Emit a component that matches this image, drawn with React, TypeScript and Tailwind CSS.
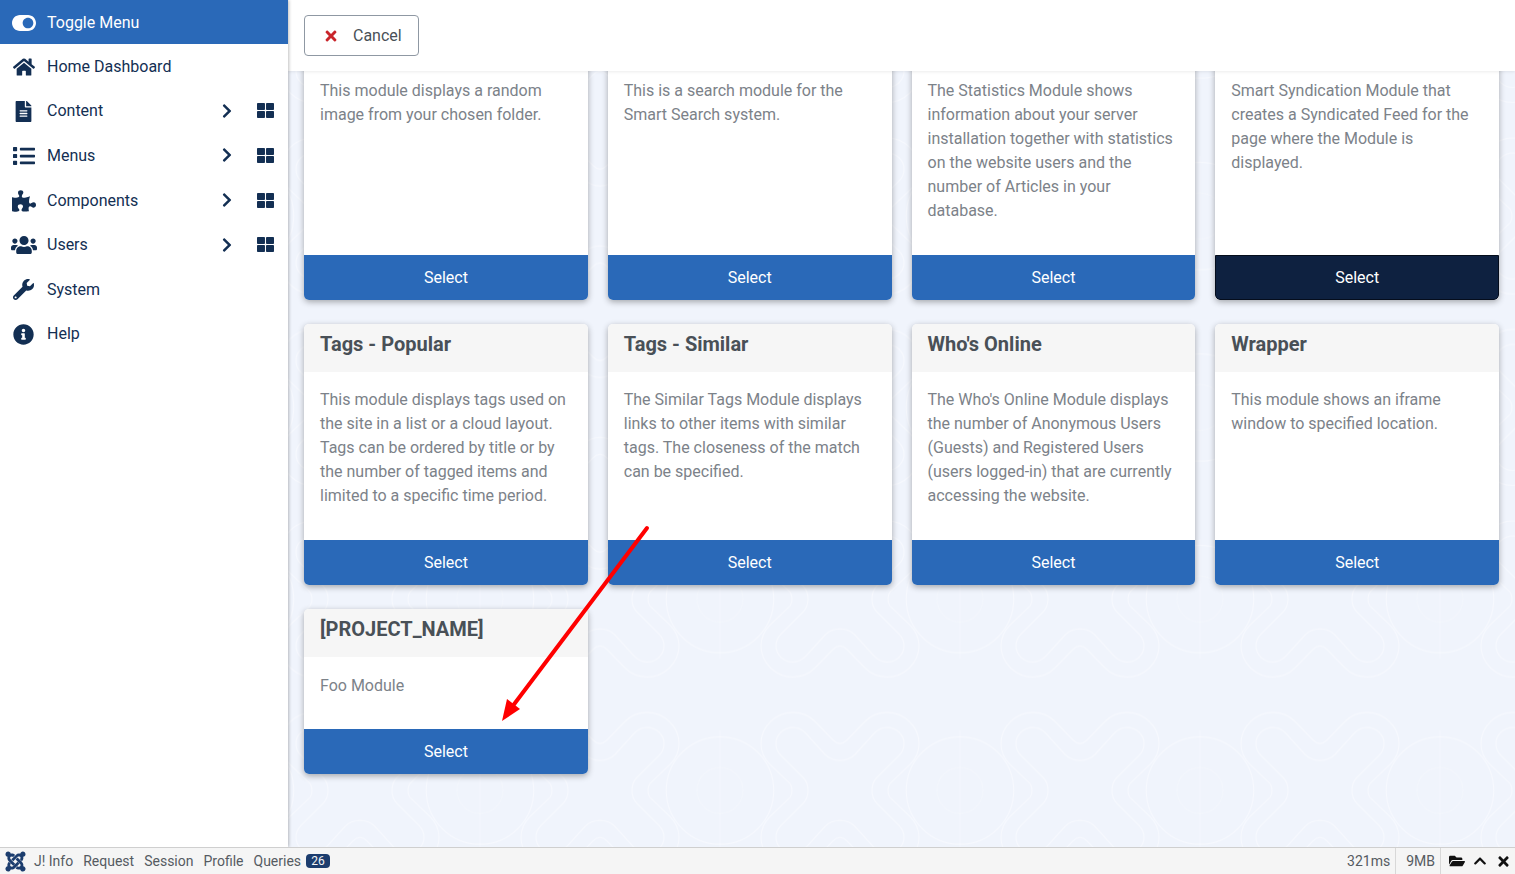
import React from "react";
import { FaToggleOn, FaHome, FaFileAlt, FaList, FaPuzzlePiece, FaUsers, FaWrench, FaInfoCircle, FaChevronRight, FaThLarge, FaTimes, FaFolderOpen, FaChevronUp, FaJoomla } from "react-icons/fa";

const nav = [
  { label: "Home Dashboard", Icon: FaHome, size: 22 },
  { label: "Content", Icon: FaFileAlt, size: 21, more: true },
  { label: "Menus", Icon: FaList, size: 22, more: true },
  { label: "Components", Icon: FaPuzzlePiece, size: 24, more: true },
  { label: "Users", Icon: FaUsers, size: 26, more: true },
  { label: "System", Icon: FaWrench, size: 21 },
  { label: "Help", Icon: FaInfoCircle, size: 21 },
];

const cards = [
  { title: "", text: "This module displays a random image from your chosen folder." },
  { title: "", text: "This is a search module for the Smart Search system." },
  { title: "", text: "The Statistics Module shows information about your server installation together with statistics on the website users and the number of Articles in your database." },
  { title: "", text: "Smart Syndication Module that creates a Syndicated Feed for the page where the Module is displayed.", dark: true },
  { title: "Tags - Popular", text: "This module displays tags used on the site in a list or a cloud layout. Tags can be ordered by title or by the number of tagged items and limited to a specific time period." },
  { title: "Tags - Similar", text: "The Similar Tags Module displays links to other items with similar tags. The closeness of the match can be specified." },
  { title: "Who's Online", text: "The Who's Online Module displays the number of Anonymous Users (Guests) and Registered Users (users logged-in) that are currently accessing the website." },
  { title: "Wrapper", text: "This module shows an iframe window to specified location." },
  { title: "[PROJECT_NAME]", text: "Foo Module", low: true },
];

const outer = "M0,-47 C3,-47 5,-48.5 7,-50.5 L25,-69 C31,-75 39,-78 47,-78 C64,-78 79,-64 79,-47 C79,-39 76,-32 70,-26 L50,-7 C48,-4.5 48,-2 48,0";
const inner = "M0,-30 C6,-30 11,-32 15,-36 L34,-57 C38,-61 42,-63 47,-63 C56,-63 64,-56 64,-47 C64,-42 62,-38 59,-35 L37,-13 C33,-9 32,-4 32,0";

function Pattern() {
  const q = [1, -1];
  return (
    <svg className="absolute inset-0 h-full w-full" aria-hidden="true">
      <defs>
        <pattern id="bgp" width="240" height="191.5" patternUnits="userSpaceOnUse" patternTransform="translate(192 120)">
          <g fill="none" stroke="#f7f9fe" strokeWidth="1">
            <circle cx="0" cy="96" r="53.7" />
            <circle cx="240" cy="96" r="53.7" />
            <circle cx="0" cy="96" r="23" strokeOpacity="0.45" />
            <circle cx="240" cy="96" r="23" strokeOpacity="0.45" />
            <path d="M0 36V156M240 36V156" strokeOpacity="0.4" />
            <g transform="translate(120 96)">
              {q.map((sx) =>
                q.map((sy) => (
                  <g key={`${sx}${sy}`} transform={`scale(${sx} ${sy})`}>
                    <path d={outer} />
                    <path d={inner} />
                  </g>
                ))
              )}
            </g>
          </g>
        </pattern>
      </defs>
      <rect width="100%" height="100%" fill="url(#bgp)" />
    </svg>
  );
}

function Card({ title, text, dark, low }: { title: string; text: string; dark?: boolean; low?: boolean }) {
  return (
    <div className="flex flex-col overflow-hidden rounded-[5px] bg-white shadow-[0_2px_6px_rgba(0,0,0,0.32)]">
      <div className="h-12 bg-[#f6f6f6] px-4 pt-2 text-[20px] font-bold leading-6 text-[#495057]">{title}</div>
      <div className={`flex-1 pl-4 pr-[15px] text-base leading-6 text-[#7c8289] ${low ? "pb-[31px] pt-[17px]" : "pb-[32px] pt-[16px]"}`}>{text}</div>
      <div className={`flex h-[45px] items-center justify-center text-base text-white ${dark ? "rounded-b-[5px] border border-[#050d1c] bg-[#0e2140]" : "bg-[#2a69b8]"}`}>Select</div>
    </div>
  );
}

export default function App() {
  return (
    <div className="relative flex h-screen w-full flex-col overflow-hidden bg-white font-['Roboto',sans-serif]">
      <div className="flex min-h-0 flex-1">
        <aside className="z-20 w-[288px] shrink-0 bg-white shadow-[1px_0_3px_rgba(0,0,0,0.25)]">
          <div className="flex h-11 items-center bg-[#2a69b8] pt-px text-base text-white">
            <span className="flex w-[47px] justify-center pl-px"><FaToggleOn size={24} /></span>
            Toggle Menu
          </div>
          {nav.map(({ label, Icon, size, more }) => (
            <div key={label} className="flex h-[44.6px] items-center pt-px text-base text-[#132f53]">
              <span className="flex w-[47px] justify-center"><Icon size={size} /></span>
              <span className="flex-1">{label}</span>
              {more && (
                <>
                  <FaChevronRight size={16} className="-mt-px mr-[22px]" />
                  <FaThLarge size={17} className="-mt-px mr-[14px]" />
                </>
              )}
            </div>
          ))}
        </aside>
        <main className="relative flex min-w-0 flex-1 flex-col bg-[#f0f4fc]">
          <Pattern />
          <header className="relative z-10 flex h-[71px] shrink-0 items-center bg-white pl-4 shadow-[0_1px_3px_rgba(0,0,0,0.08)]">
            <button className="flex h-[41px] w-[115px] items-center rounded-[4px] border border-[#8f98a3] bg-white pl-[18px] text-base text-[#495057]">
              <FaTimes size={16} className="mr-[14px] text-[#c9252b]" />
              Cancel
            </button>
          </header>
          <div className="relative min-h-0 flex-1 overflow-hidden">
            <div className="-mt-[56px] grid grid-cols-4 gap-x-5 gap-y-6 pl-4 pr-4">
              {cards.map((c, i) => (
                <Card key={i} {...c} />
              ))}
            </div>
          </div>
        </main>
      </div>
      <footer className="z-30 flex h-[27px] shrink-0 items-center border-t border-[#cfcfcf] bg-[#f5f5f5] text-sm text-[#555b62]">
        <FaJoomla size={23} className="ml-[3.5px] mr-[7.5px] text-[#1c3d6e]" />
        <span className="mr-[10px]">J! Info</span>
        <span className="mr-[10px]">Request</span>
        <span className="mr-[10px]">Session</span>
        <span className="mr-[10px]">Profile</span>
        <span className="mr-[5px]">Queries</span>
        <span className="flex h-[14px] w-[24px] items-center justify-center rounded-[4px] bg-[#1c3d6e] text-xs text-[#f5f5f5]">26</span>
        <span className="ml-auto flex h-full items-center border-r border-[#d8d8d8] pr-[5px]">321ms</span>
        <span className="flex h-full items-center border-r border-[#d8d8d8] pl-[10px] pr-[5px]">9MB</span>
        <span className="flex items-center text-[#111]">
          <FaFolderOpen size={16} className="ml-[8px]" />
          <FaChevronUp size={14} className="ml-[8px]" />
          <FaTimes size={15} className="ml-[9px] mr-[4px]" />
        </span>
      </footer>
      <svg className="pointer-events-none absolute left-0 top-0 z-40 h-[874px] w-[1515px]" aria-hidden="true">
        <line x1="647" y1="528" x2="512" y2="707" stroke="#ff0000" strokeWidth="4" strokeLinecap="round" />
        <polygon points="502,721 507,699 520,709" fill="#ff0000" />
      </svg>
    </div>
  );
}
